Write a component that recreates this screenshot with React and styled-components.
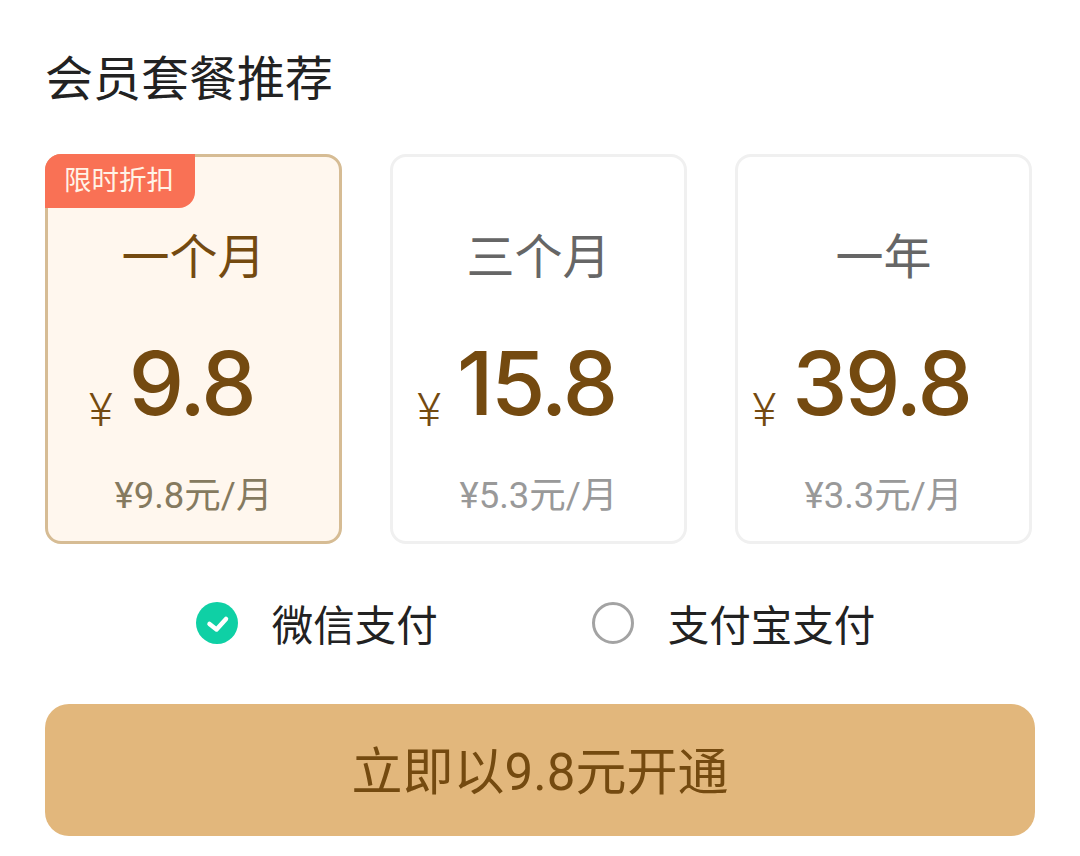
import React from 'react';
import styled, { createGlobalStyle } from 'styled-components';

const plans = [
  { name: '一个月', price: '9.8', unit: '¥9.8元/月', active: true, tag: '限时折扣' },
  { name: '三个月', price: '15.8', unit: '¥5.3元/月' },
  { name: '一年', price: '39.8', unit: '¥3.3元/月' },
];

function App() {
  return (
    <Page>
      <GlobalStyle />
      <Title>会员套餐推荐</Title>
      <Plans>
        {plans.map((plan) => (
          <Plan key={plan.name} $active={plan.active}>
            {plan.tag && <Tag>{plan.tag}</Tag>}
            <PlanName $active={plan.active}>{plan.name}</PlanName>
            <PriceRow>
              <Currency>¥</Currency>
              <Price>{plan.price}</Price>
            </PriceRow>
            <Unit $active={plan.active}>{plan.unit}</Unit>
          </Plan>
        ))}
      </Plans>
      <Payments>
        <Payment>
          <CheckIcon viewBox="0 0 42 42">
            <circle cx="21" cy="21" r="21" fill="#0fd0a5" />
            <path d="M13.5 22l7 5.5L30 17" fill="none" stroke="#fff" strokeWidth="4.5" strokeLinecap="round" strokeLinejoin="round" />
          </CheckIcon>
          <span>微信支付</span>
        </Payment>
        <Payment>
          <Radio />
          <span>支付宝支付</span>
        </Payment>
      </Payments>
      <Submit>立即以9.8元开通</Submit>
    </Page>
  );
}

const GlobalStyle = createGlobalStyle`
  body {
    margin: 0;
    background: #fff;
    font-family: 'Roboto', 'Noto Sans CJK SC', sans-serif;
  }
`;

const Page = styled.div`
  width: 1080px;
  height: 856px;
  padding: 52px 45px 0;
  box-sizing: border-box;
  overflow: hidden;
`;

const Title = styled.h2`
  margin: 0;
  font-size: 48px;
  line-height: 56px;
  font-weight: 400;
  color: #222;
`;

const Plans = styled.div`
  display: flex;
  gap: 48px;
  margin-top: 46px;
`;

const Plan = styled.div`
  position: relative;
  display: flex;
  flex-direction: column;
  align-items: center;
  width: 297px;
  height: 390px;
  box-sizing: border-box;
  border: 3px solid ${(p) => (p.$active ? '#d6bc94' : '#f0f0f0')};
  border-radius: 16px;
  background: ${(p) => (p.$active ? '#fff7ee' : '#fff')};
`;

const Tag = styled.div`
  position: absolute;
  top: -3px;
  left: -3px;
  width: 150px;
  height: 54px;
  padding-right: 2px;
  box-sizing: border-box;
  border-radius: 16px 0 16px 0;
  background: #f97155;
  color: #fff3e6;
  font-size: 27.5px;
  line-height: 54px;
  text-align: center;
`;

const PlanName = styled.div`
  margin-top: 71px;
  font-size: 48px;
  line-height: 60px;
  color: ${(p) => (p.$active ? '#744a10' : '#666')};
`;

const PriceRow = styled.div`
  display: flex;
  align-items: flex-end;
  gap: 16px;
  margin-top: 41px;
  padding-right: 44px;
  color: #744a10;
`;

const Currency = styled.span`
  font-size: 46px;
  font-weight: 300;
  line-height: 54px;
`;

const Price = styled.span`
  font-family: 'Inter', 'Roboto', sans-serif;
  font-size: 88px;
  line-height: 108px;
  font-weight: 500;
  letter-spacing: -2.5px;
`;

const Unit = styled.div`
  margin-top: 37px;
  font-size: 36.5px;
  line-height: 44px;
  color: ${(p) => (p.$active ? '#857a5f' : '#999')};
`;

const Payments = styled.div`
  display: flex;
  justify-content: center;
  gap: 154px;
  margin-top: 58px;
  padding-right: 9px;
`;

const Payment = styled.div`
  display: flex;
  align-items: center;
  gap: 34px;
  font-size: 41.5px;
  line-height: 48px;
  color: #222;
`;

const CheckIcon = styled.svg`
  width: 42px;
  height: 42px;
  margin-bottom: 7px;
`;

const Radio = styled.span`
  width: 42px;
  height: 42px;
  margin-bottom: 7px;
  box-sizing: border-box;
  border: 3px solid #a3a3a3;
  border-radius: 50%;
`;

const Submit = styled.button`
  display: block;
  width: 990px;
  height: 132px;
  margin-top: 53px;
  padding: 0 0 4px;
  border: 0;
  border-radius: 24px;
  background: #e2b77c;
  color: #744a10;
  font-family: inherit;
  font-size: 51px;
`;

export default App;
